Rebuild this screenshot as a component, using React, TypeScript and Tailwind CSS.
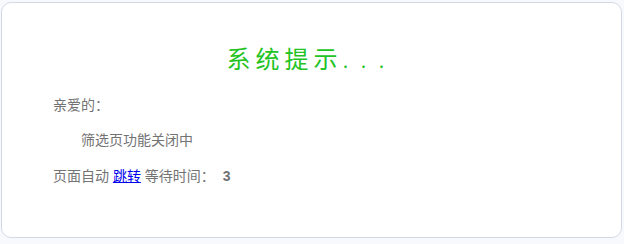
export default function App() {
  return (
    <div className="h-[244px] bg-[#f7f9fc] pl-[1px] pr-[2px] pt-[2px] font-['Liberation_Sans','Noto_Sans_CJK_SC',sans-serif]">
      <div className="h-[236px] rounded-[10px] border border-[#d3d9e4] bg-white">
        <h1 className="pt-[38px] text-center text-[24px] leading-[34px] tracking-[5px] text-[#22c322] font-['Noto_Sans_CJK_SC',sans-serif]">
          系统提示<span className="font-light tracking-[12px]">...</span>
        </h1>
        <div className="px-[51px] pt-[20px] text-[14px] leading-[20px] text-[#737373]">
          <p>亲爱的：</p>
          <p className="mt-[15px] indent-[2em]">筛选页功能关闭中</p>
          <p className="mt-[16px]">
            页面自动{" "}
            <a href="#" className="text-[#0000ee] underline">
              跳转
            </a>{" "}
            等待时间：&nbsp;<b className="ml-[4px]">3</b>
          </p>
        </div>
      </div>
    </div>
  );
}
